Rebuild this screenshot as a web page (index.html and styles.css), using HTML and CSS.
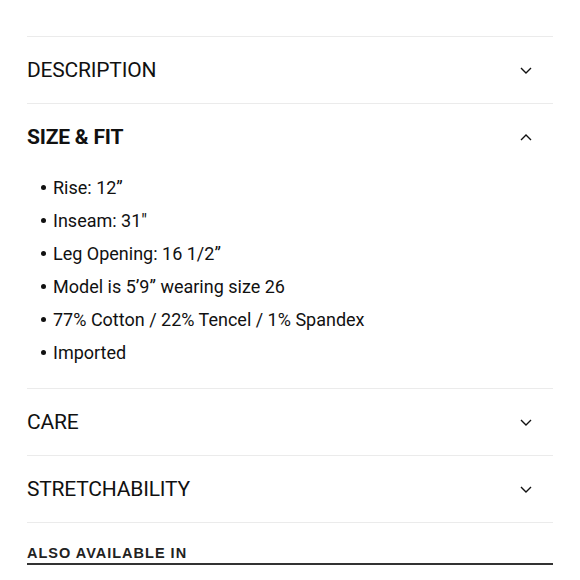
FILE: index.html
```html
<!DOCTYPE html>
<html>
<head>
  <meta charset="UTF-8" />
  <title>Product details</title>
  <meta name="viewport" content="width=device-width, initial-scale=1.0" />
  <link rel="stylesheet" href="styles.css">
</head>
<body>
  <div class="details">

    <div class="acc-item">
      <div class="acc-head">
        <span class="acc-title">DESCRIPTION</span>
        <svg class="chev" width="12" height="7" viewBox="0 0 12 7"><polyline points="1,1 6,6 11,1" /></svg>
      </div>
    </div>

    <div class="acc-item open">
      <div class="acc-head">
        <span class="acc-title">SIZE &amp; FIT</span>
        <svg class="chev" width="12" height="7" viewBox="0 0 12 7"><polyline points="1,6 6,1 11,6" /></svg>
      </div>
      <ul class="fit-list">
        <li>Rise: 12”</li>
        <li>Inseam: 31"</li>
        <li>Leg Opening: 16 1/2”</li>
        <li>Model is 5’9” wearing size 26</li>
        <li>77% Cotton / 22% Tencel / 1% Spandex</li>
        <li>Imported</li>
      </ul>
    </div>

    <div class="acc-item">
      <div class="acc-head">
        <span class="acc-title">CARE</span>
        <svg class="chev" width="12" height="7" viewBox="0 0 12 7"><polyline points="1,1 6,6 11,1" /></svg>
      </div>
    </div>

    <div class="acc-item last">
      <div class="acc-head">
        <span class="acc-title">STRETCHABILITY</span>
        <svg class="chev" width="12" height="7" viewBox="0 0 12 7"><polyline points="1,1 6,6 11,1" /></svg>
      </div>
    </div>

    <h2 class="also">ALSO AVAILABLE IN</h2>
  </div>
</body>
</html>
```

FILE: styles.css
```css
body {
  margin: 0;
  background: #fff;
  color: #111;
  font-family: Roboto, "Liberation Sans", Arial, sans-serif;
}
.details {
  margin: 0 27px;
  padding-top: 36px;
}
.acc-item {
  border-top: 1px solid #ebebeb;
}
.acc-item.last {
  border-bottom: 1px solid #ebebeb;
}
.acc-head {
  height: 66px;
  display: flex;
  align-items: center;
  justify-content: space-between;
  padding-right: 21px;
}
.acc-title {
  font-size: 21px;
  letter-spacing: -0.2px;
}
.open .acc-title {
  font-weight: 700;
}
.chev {
  display: block;
  fill: none;
  stroke: #111;
  stroke-width: 1.4;
}
.fit-list {
  list-style: none;
  margin: 0;
  padding: 1px 0 19px 14px;
  font-size: 18px;
  line-height: 33px;
}
.fit-list li::before {
  content: "";
  display: inline-block;
  width: 5px;
  height: 5px;
  border-radius: 50%;
  background: #111;
  margin-right: 7px;
  vertical-align: 4px;
}
.also {
  margin: 20px 0 0;
  font-family: "Liberation Sans", Arial, sans-serif;
  font-size: 14.5px;
  font-weight: 700;
  letter-spacing: 1px;
  line-height: 20px;
  color: #222;
  border-bottom: 2px solid #333;
}
```
